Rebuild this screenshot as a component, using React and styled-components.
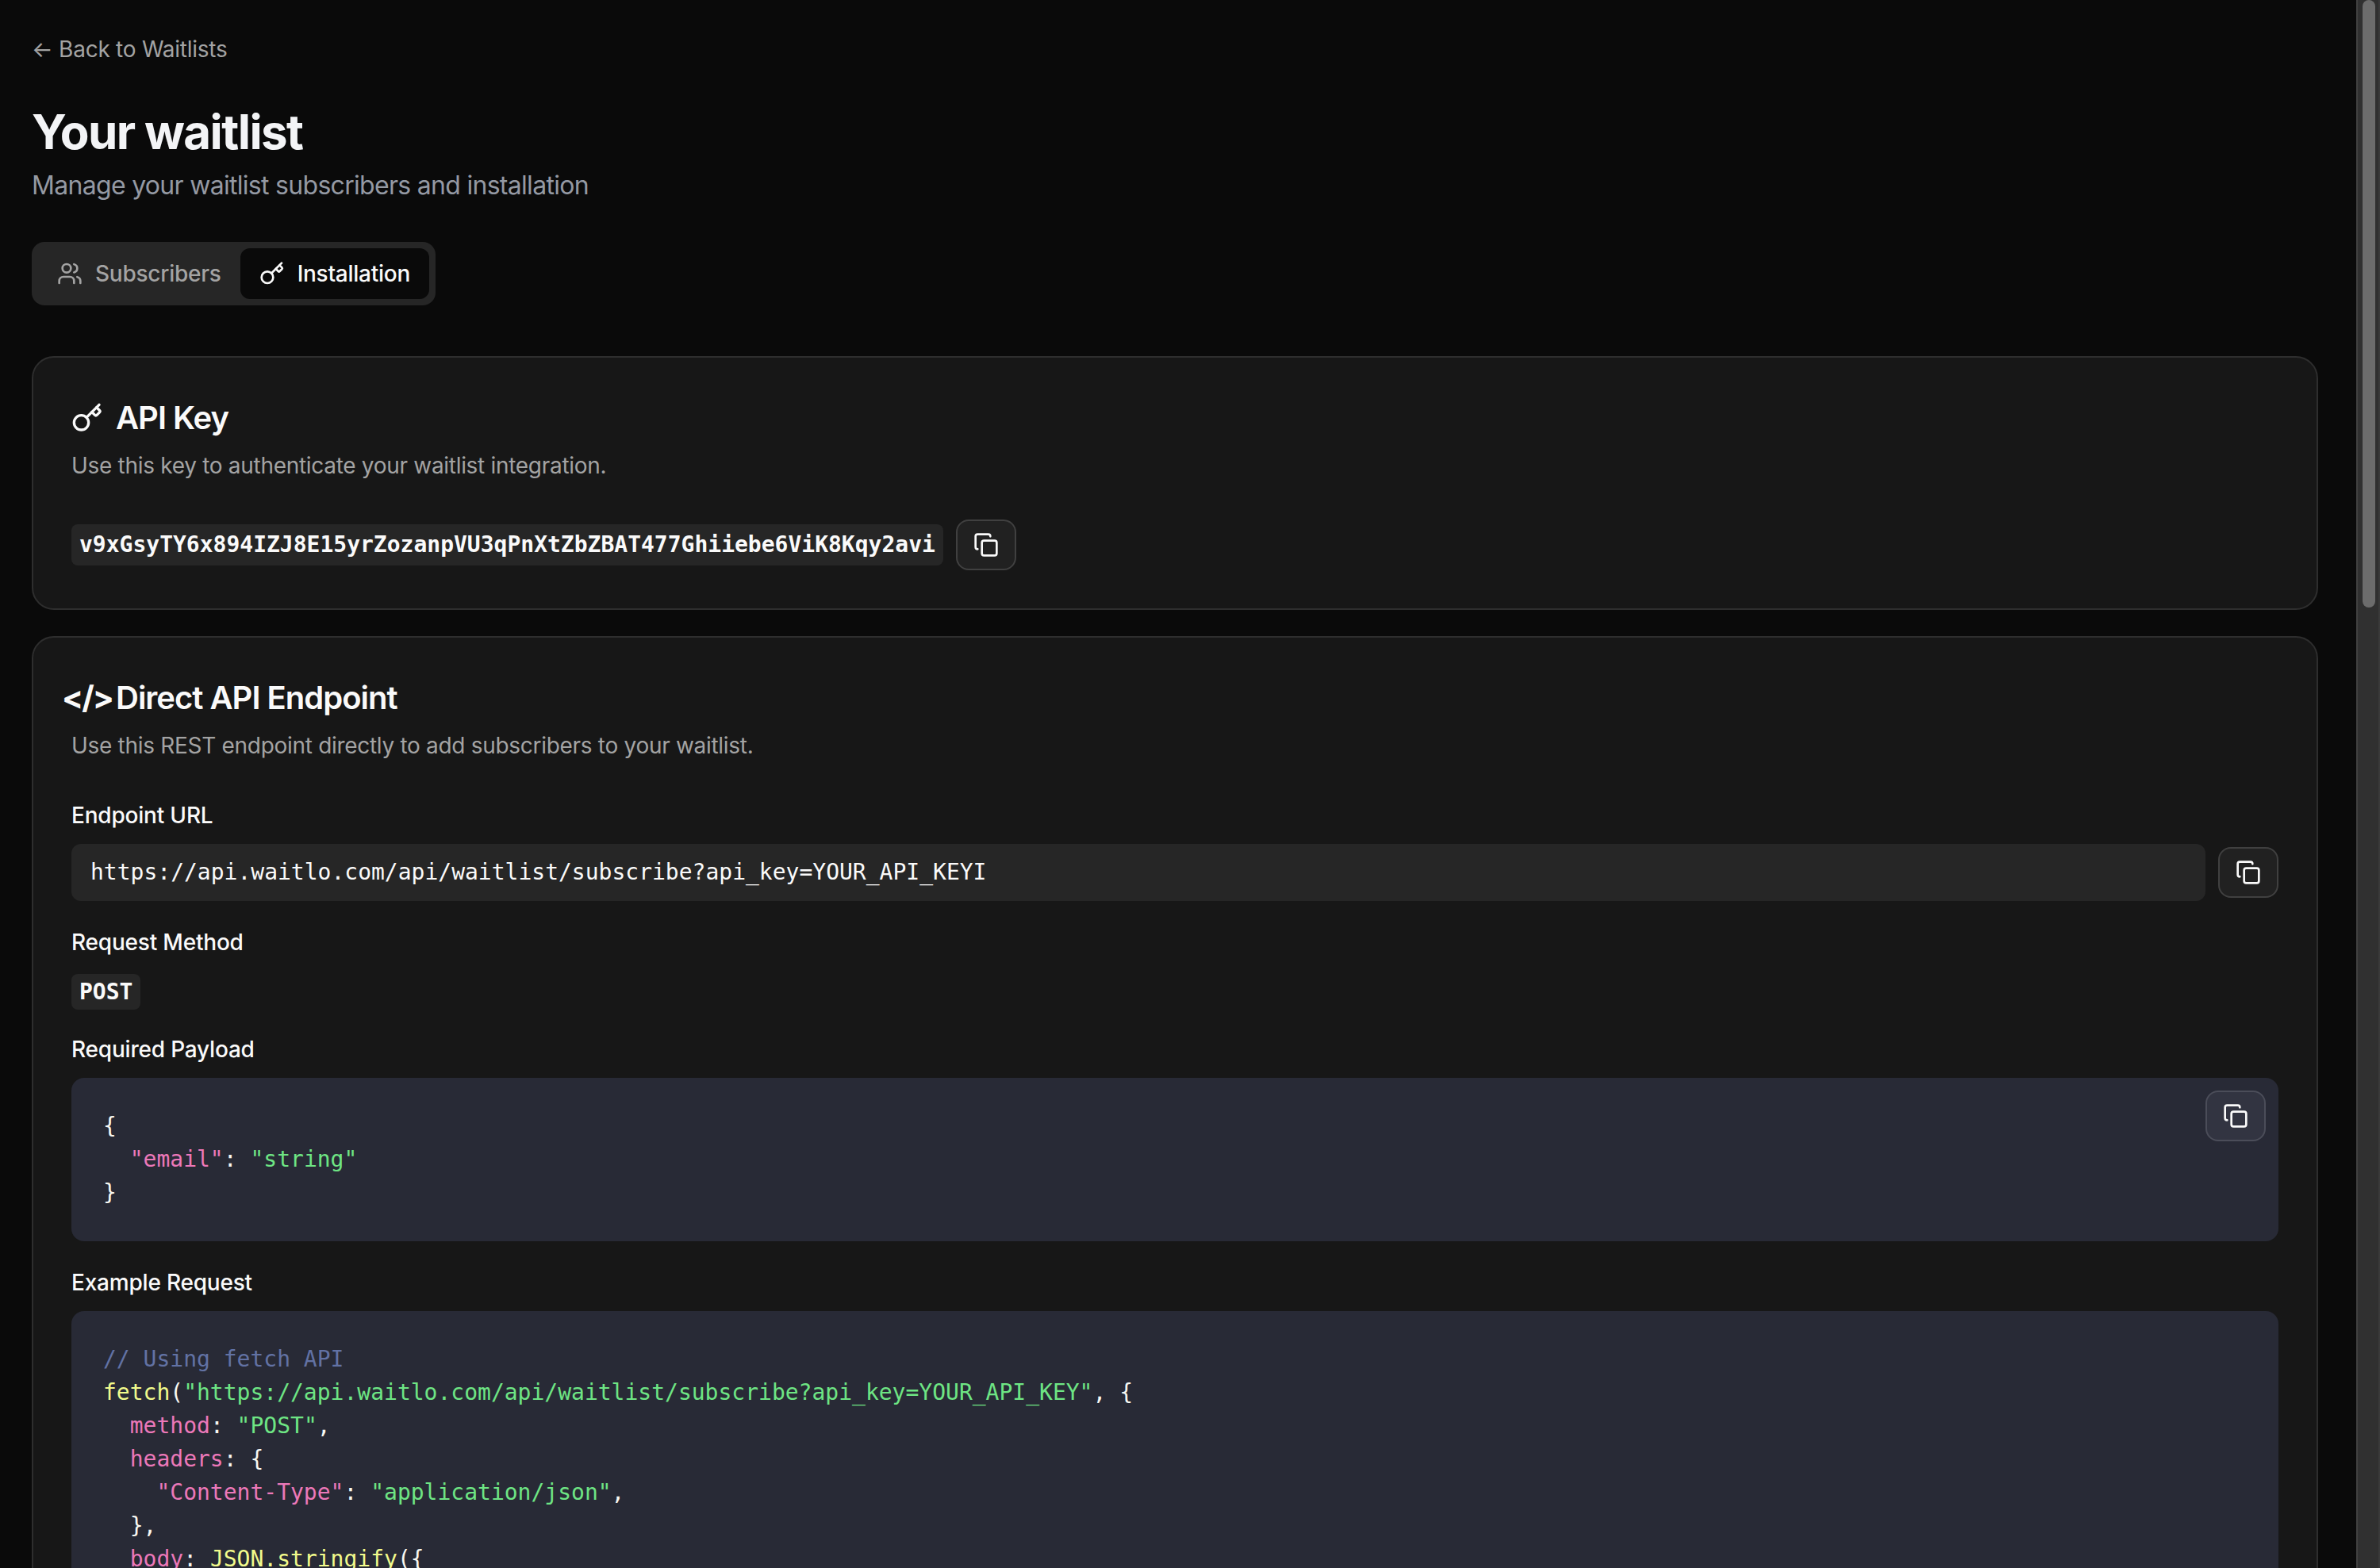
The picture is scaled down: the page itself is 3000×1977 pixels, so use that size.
import React from "react";
import styled, { createGlobalStyle } from "styled-components";
import { Copy, Key, Users } from "lucide-react";

const Global = createGlobalStyle`
  html, body { height: 100%; overflow: hidden; }
  body { margin: 0; background: #0a0a0a; font-family: Inter, "Liberation Sans", sans-serif; color: #fafafa; }
`;

const mono = `"DejaVu Sans Mono", "Liberation Mono", monospace`;

const Shell = styled.div`
  display: flex;
  height: 100vh;
  overflow: hidden;
`;
const Page = styled.main`
  flex: 1;
  min-width: 0;
  box-sizing: border-box;
  padding: 42px 48px 48px 40px;
`;
const ScrollRail = styled.aside`
  flex: none;
  box-sizing: border-box;
  width: 30px;
  padding-left: 6px;
  border-left: 2px solid #414141;
  border-right: 2px solid #3a3a3a;
  background: #303030;
`;
const ScrollThumb = styled.div`
  width: 16px;
  height: 766px;
  border-radius: 8px;
  background: #6c6c6c;
`;
const BackLink = styled.a`
  display: block;
  font-size: 28px;
  line-height: 40px;
  letter-spacing: -0.25px;
  color: #a3a3a3;
  margin-bottom: 48px;
`;
const Title = styled.h1`
  margin: 0;
  font-size: 60px;
  line-height: 72px;
  font-weight: 700;
  letter-spacing: -1.6px;
  color: #f3f4f6;
`;
const Subtitle = styled.p`
  margin: 8px 0 0;
  font-size: 32px;
  line-height: 48px;
  letter-spacing: -0.7px;
  color: #9499a3;
`;
const Tabs = styled.div`
  display: inline-flex;
  margin-top: 47px;
  padding: 8px;
  border-radius: 16px;
  background: #262626;
`;
const Tab = styled.button`
  display: flex;
  align-items: center;
  gap: 16px;
  height: 64px;
  padding: 0 24px;
  border: 0;
  border-radius: 12px;
  font: 500 28px/40px Inter, sans-serif;
  letter-spacing: -0.25px;
  color: ${(p) => (p.$active ? "#fafafa" : "#a3a3a3")};
  background: ${(p) => (p.$active ? "#0a0a0a" : "transparent")};
`;
const Stack = styled.div`
  display: flex;
  flex-direction: column;
  gap: 33px;
  margin-top: 64px;
`;
const Card = styled.section`
  padding: 48px;
  border: 2px solid #2e2e2e;
  border-radius: 28px;
  background: #171717;
`;
const CardTitle = styled.h2`
  display: flex;
  align-items: center;
  gap: 16px;
  margin: 0;
  font-size: 40px;
  line-height: 56px;
  font-weight: 600;
  letter-spacing: -1px;
  color: #fafafa;
`;
const GlyphBox = styled.span`
  display: flex;
  justify-content: center;
  flex: none;
  width: 40px;
  white-space: nowrap;
  font-weight: 700;
  letter-spacing: -2px;
`;
const CardText = styled.p`
  margin: 12px 0 48px;
  font-size: 28px;
  line-height: 40px;
  letter-spacing: -0.3px;
  color: #a3a3a3;
`;
const Row = styled.div`
  display: flex;
  align-items: center;
  gap: 16px;
`;
const InlineCode = styled.code`
  display: inline-block;
  padding: 0 10px;
  height: ${(p) => p.$h}px;
  line-height: ${(p) => p.$h}px;
  border-radius: 8px;
  background: #262626;
  font-family: ${mono};
  font-size: 28px;
  font-weight: 700;
  color: #fafafa;
`;
const CopyButton = styled.button`
  display: flex;
  align-items: center;
  justify-content: center;
  flex: none;
  box-sizing: border-box;
  width: 76px;
  height: 64px;
  padding: 0;
  border: 2px solid #404040;
  border-radius: 16px;
  background: #212121;
  color: #fafafa;
`;
const FloatingCopy = styled(CopyButton)`
  position: absolute;
  top: 16px;
  right: 16px;
  border-color: #4b4d59;
  background: #323441;
`;
const Field = styled.div`
  margin-top: ${(p) => p.$top ?? 32}px;
`;
const Label = styled.div`
  font-size: 28px;
  line-height: 40px;
  font-weight: 500;
  letter-spacing: -0.2px;
  color: #fafafa;
  margin-bottom: ${(p) => p.$gap ?? 16}px;
`;
const UrlBox = styled.div`
  flex: 1;
  height: 72px;
  box-sizing: border-box;
  padding: 0 24px;
  border-radius: 12px;
  background: #262626;
  font: 400 28px/72px ${mono};
  color: #fafafa;
`;
const CodeBlock = styled.div`
  position: relative;
  border-radius: 16px;
  background: #282a36;
`;
const Pre = styled.pre`
  margin: 0;
  padding: 40px;
  font: 400 28px/42px ${mono};
  color: #f8f8f2;
`;
const tokenColors = { k: "#ec78b9", s: "#6ee584", f: "#f1fa8c", c: "#6272a4" };
const Tok = styled.span`
  color: ${(p) => tokenColors[p.$t]};
`;

export default function App() {
  return (
    <Shell>
      <Global />
      <Page>
        <BackLink>← Back to Waitlists</BackLink>
        <Title>Your waitlist</Title>
        <Subtitle>Manage your waitlist subscribers and installation</Subtitle>
        <Tabs>
          <Tab><Users size={32} strokeWidth={2} />Subscribers</Tab>
          <Tab $active><Key size={32} strokeWidth={2} />Installation</Tab>
        </Tabs>
        <Stack>
          <Card>
            <CardTitle><Key size={40} strokeWidth={2} />API Key</CardTitle>
            <CardText>Use this key to authenticate your waitlist integration.</CardText>
            <Row>
              <InlineCode $h={52}>v9xGsyTY6x894IZJ8E15yrZozanpVU3qPnXtZbZBAT477Ghiiebe6ViK8Kqy2avi</InlineCode>
              <CopyButton><Copy size={32} /></CopyButton>
            </Row>
          </Card>
          <Card>
            <CardTitle><GlyphBox>&lt;/&gt;</GlyphBox>Direct API Endpoint</CardTitle>
            <CardText>Use this REST endpoint directly to add subscribers to your waitlist.</CardText>
            <Field $top={0}>
              <Label>Endpoint URL</Label>
              <Row>
                <UrlBox>https://api.waitlo.com/api/waitlist/subscribe?api_key=YOUR_API_KEYI</UrlBox>
                <CopyButton><Copy size={32} /></CopyButton>
              </Row>
            </Field>
            <Field>
              <Label $gap={20}>Request Method</Label>
              <InlineCode $h={45}>POST</InlineCode>
            </Field>
            <Field $top={30}>
              <Label>Required Payload</Label>
              <CodeBlock>
                <FloatingCopy><Copy size={32} /></FloatingCopy>
                <Pre>{"{\n  "}<Tok $t="k">"email"</Tok>: <Tok $t="s">"string"</Tok>{"\n}"}</Pre>
              </CodeBlock>
            </Field>
            <Field>
              <Label>Example Request</Label>
              <CodeBlock>
                <Pre>
                  <Tok $t="c">// Using fetch API</Tok>{"\n"}
                  <Tok $t="f">fetch</Tok>(<Tok $t="s">"https://api.waitlo.com/api/waitlist/subscribe?api_key=YOUR_API_KEY"</Tok>, {"{\n  "}
                  <Tok $t="k">method</Tok>: <Tok $t="s">"POST"</Tok>,{"\n  "}
                  <Tok $t="k">headers</Tok>: {"{\n    "}
                  <Tok $t="k">"Content-Type"</Tok>: <Tok $t="s">"application/json"</Tok>,{"\n  },\n  "}
                  <Tok $t="k">body</Tok>: <Tok $t="f">JSON.stringify</Tok>({"{"}
                </Pre>
              </CodeBlock>
            </Field>
          </Card>
        </Stack>
      </Page>
      <ScrollRail><ScrollThumb /></ScrollRail>
    </Shell>
  );
}
